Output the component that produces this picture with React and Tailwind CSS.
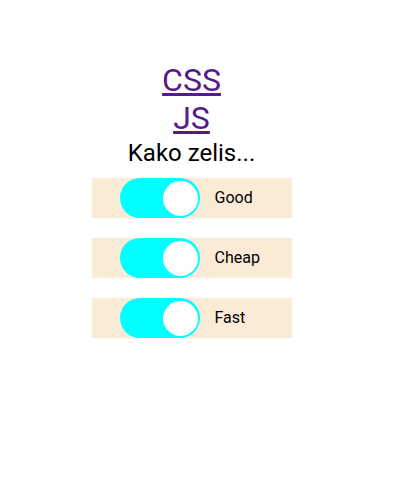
export default function App() {
  const items = ["Good", "Cheap", "Fast"];
  return (
    <div className="w-[401px] h-[484px] bg-white" style={{ fontFamily: "Roboto, sans-serif" }}>
      <div className="w-[383px] flex flex-col items-center pt-[62px]">
        <a href="#" className="block text-[32px] leading-[37.5px] text-[#551a8b] underline">CSS</a>
        <a href="#" className="block text-[32px] leading-[37.5px] text-[#551a8b] underline">JS</a>
        <h2 className="text-[24px] leading-[28px] font-normal text-black mt-[2px]">Kako zelis...</h2>
        <div className="flex flex-col gap-[20px] mt-[11px]">
          {items.map((t) => (
            <div key={t} className="w-[200px] h-[40px] bg-[#faebd7] flex items-center pl-[28px] gap-[15px]">
              <div className="w-[80px] h-[40px] rounded-full bg-[#00ffff] flex items-center justify-end pr-[2px]">
                <div className="w-[35px] h-[35px] rounded-full bg-white"></div>
              </div>
              <span className="text-[16px] text-black">{t}</span>
            </div>
          ))}
        </div>
      </div>
    </div>
  );
}
